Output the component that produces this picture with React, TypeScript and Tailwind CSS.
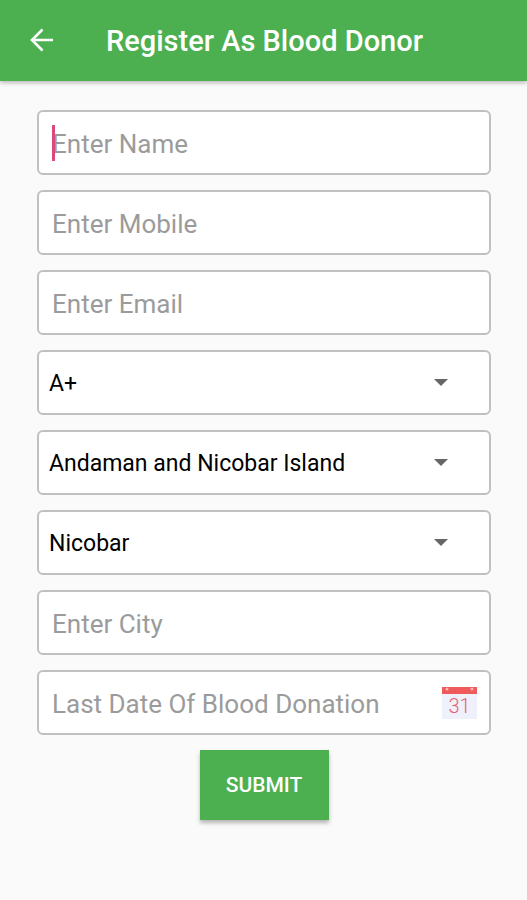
import { useState } from "react";

const box =
  "h-[65px] w-full rounded-md border-2 border-[#c0c0c0] bg-white outline-none";
const textBox = `${box} px-[13px] pt-[2px] text-[26px] text-black placeholder:text-[#9b9b9b] placeholder:opacity-100`;

function TextField({ label, type = "text", caret = false }: { label: string; type?: string; caret?: boolean }) {
  return (
    <div className="relative">
      <input type={type} aria-label={label} placeholder={label} className={`${textBox} caret-[#d81b60]`} />
      {caret && <span className="absolute top-[15px] left-[15px] h-9 w-[3px] bg-[#dc4a7c]" />}
    </div>
  );
}

function SelectField({ label, options }: { label: string; options: string[] }) {
  const [value, setValue] = useState(options[0]);
  return (
    <div className="relative">
      <select
        aria-label={label}
        value={value}
        onChange={(e) => setValue(e.target.value)}
        className={`${box} appearance-none pt-1 pr-16 pl-[10px] text-[23px] text-black`}
      >
        {options.map((o) => (
          <option key={o}>{o}</option>
        ))}
      </select>
      <svg
        viewBox="0 0 14 7"
        className="pointer-events-none absolute top-[29px] right-[43px] h-[7px] w-[14px]"
        fill="#666666"
        aria-hidden="true"
      >
        <path d="M0 0h14L7 7z" />
      </svg>
    </div>
  );
}

function CalendarButton() {
  return (
    <button type="button" aria-label="Pick a date" className="absolute top-[17px] right-[14px] flex h-8 w-[35px] flex-col bg-[#eff1fa]">
      <svg viewBox="0 0 35 7" className="h-[7px] w-full" aria-hidden="true">
        <path d="M0 0h35v7H0z" fill="#ef5a5a" />
        <circle cx="5" cy="2" r="1.500" fill="#f9b4b4" />
        <circle cx="30" cy="2" r="1.500" fill="#f9b4b4" />
      </svg>
      <span className="w-full text-center text-[20px] leading-[25px] font-light text-[#e8606e]">31</span>
    </button>
  );
}

export default function App() {
  return (
    <div className="min-h-screen bg-[#fafafa] font-[Roboto,sans-serif]">
      <header className="flex h-[81px] items-center bg-[#4caf50] pl-[29px] text-white shadow-[0_2px_4px_rgba(0,0,0,0.25)]">
        <button type="button" aria-label="Back" className="mr-[53px] pb-[2px]">
          <svg viewBox="0 0 24 24" className="h-6 w-6" fill="none" stroke="currentColor" strokeWidth="2.6" aria-hidden="true">
            <path d="M24 12H3M13.500 1.500L3 12l10.500 10.500" />
          </svg>
        </button>
        <h1 className="text-[29px] leading-8 font-medium">Register As Blood Donor</h1>
      </header>
      <form className="flex flex-col gap-[15px] pt-[29px] pr-9 pl-[37px]" onSubmit={(e) => e.preventDefault()}>
        <TextField label="Enter Name" caret />
        <TextField label="Enter Mobile" type="tel" />
        <TextField label="Enter Email" type="email" />
        <SelectField label="Blood group" options={["A+", "A-", "B+", "B-", "AB+", "AB-", "O+", "O-"]} />
        <SelectField label="State" options={["Andaman and Nicobar Island"]} />
        <SelectField label="District" options={["Nicobar"]} />
        <TextField label="Enter City" />
        <div className="relative">
          <TextField label="Last Date Of Blood Donation" />
          <CalendarButton />
        </div>
        <button
          type="submit"
          className="h-[70px] w-[129px] self-center bg-[#4caf50] pt-[2px] text-[21px] font-medium text-white shadow-[0_3px_4px_rgba(0,0,0,0.28)]"
        >
          SUBMIT
        </button>
      </form>
    </div>
  );
}
